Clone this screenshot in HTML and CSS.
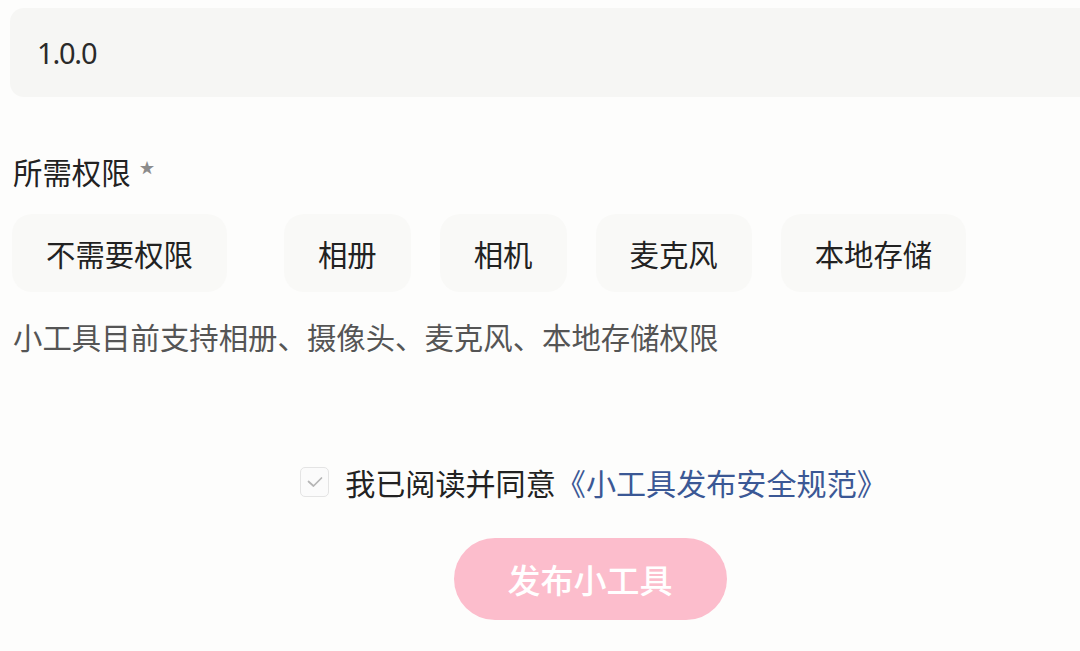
FILE: index.html
```html
<!DOCTYPE html>
<html lang="zh-CN">
<head>
<meta charset="utf-8">
<title>发布小工具</title>
<link rel="stylesheet" href="styles.css">
</head>
<body>
<main class="form">
  <div class="field-input">1.0.0</div>

  <div class="field-label">所需权限<span class="required">★</span></div>

  <div class="chips">
    <div class="chip chip-wide">不需要权限</div>
    <div class="chip">相册</div>
    <div class="chip">相机</div>
    <div class="chip">麦克风</div>
    <div class="chip">本地存储</div>
  </div>

  <p class="hint">小工具目前支持相册、摄像头、麦克风、本地存储权限</p>

  <div class="agree">
    <span class="checkbox">
      <svg width="16" height="12" viewBox="0 0 16 12"><path d="M1.5 5.5l5 4.5 8-8" fill="none" stroke="#b5b5b5" stroke-width="1.7" stroke-linecap="round" stroke-linejoin="round"/></svg>
    </span>
    <span class="agree-text">我已阅读并同意<a class="agree-link">《小工具发布安全规范》</a></span>
  </div>

  <div class="actions">
    <button class="publish">发布小工具</button>
  </div>
</main>
</body>
</html>
```

FILE: styles.css
```css
html, body {
  margin: 0;
  padding: 0;
  background: #fdfdfc;
  overflow: hidden;
}

body {
  font-family: "Noto Sans CJK SC", "Noto Sans", sans-serif;
  color: #222;
}

.form {
  width: 1160px;
  margin-left: 10px;
  padding-top: 8px;
  display: flex;
  flex-direction: column;
}

.field-input {
  height: 89px;
  box-sizing: border-box;
  padding-left: 27px;
  display: flex;
  align-items: center;
  background: #f6f6f4;
  border-radius: 14px;
  font-family: "Noto Sans", sans-serif;
  font-size: 29px;
  letter-spacing: -1.2px;
  color: #2a2a2a;
}

.field-label {
  margin-top: 54px;
  margin-left: 3px;
  font-size: 29.4px;
  line-height: 40px;
  color: #222;
  display: flex;
  align-items: center;
}

.required {
  font-size: 15px;
  color: #8c8c8c;
  margin-left: 9px;
  position: relative;
  top: -4px;
}

.chips {
  margin-top: 23px;
  margin-left: 2px;
  display: flex;
  gap: 29px;
}

.chip {
  height: 78px;
  box-sizing: border-box;
  padding: 0 34px;
  display: flex;
  align-items: center;
  background: #f9f9f7;
  border-radius: 20px;
  font-size: 29.4px;
  color: #222;
}

.chip-wide {
  margin-right: 28px;
}

.hint {
  margin: 24px 0 0 3px;
  font-size: 29.4px;
  line-height: 40px;
  color: #555;
}

.agree {
  margin-top: 106px;
  margin-left: 7px;
  display: flex;
  align-items: center;
  justify-content: center;
  gap: 16px;
  height: 40px;
}

.checkbox {
  width: 29px;
  height: 30px;
  box-sizing: border-box;
  border: 1.5px solid #e4e4e4;
  border-radius: 5px;
  background: #fbfbfb;
  display: flex;
  align-items: center;
  justify-content: center;
}

.agree-text {
  font-size: 30.1px;
  color: #222;
}

.agree-link {
  color: #3b5895;
}

.actions {
  margin-top: 36px;
  display: flex;
  justify-content: center;
}

.publish {
  width: 273px;
  height: 82px;
  border: none;
  border-radius: 41px;
  background: #fcbdcc;
  color: #fff;
  font-family: "Noto Sans CJK SC", "Noto Sans", sans-serif;
  font-size: 33px;
  font-weight: 500;
  padding: 0;
}
```
